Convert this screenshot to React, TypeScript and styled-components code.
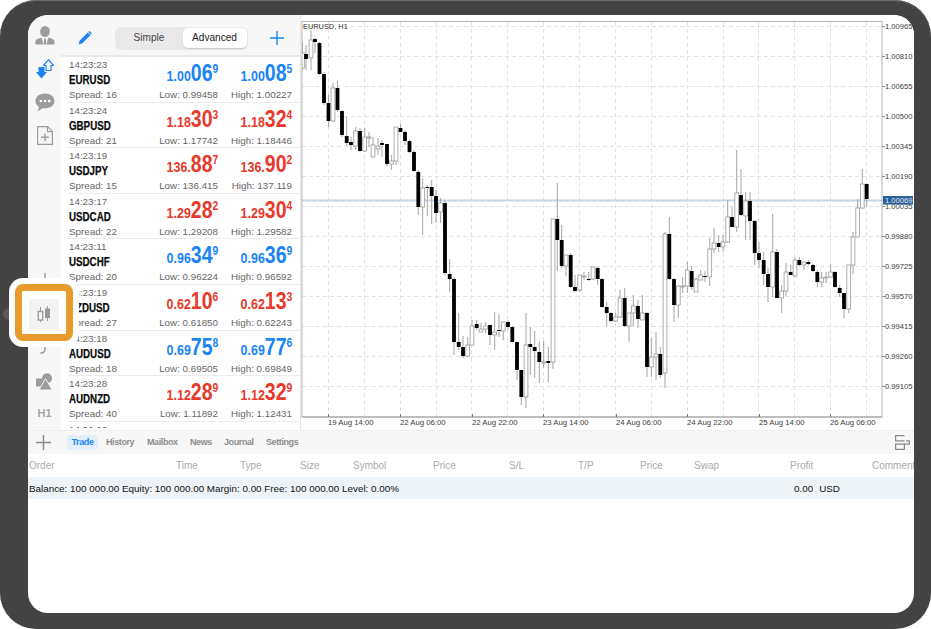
import React from "react";
import styled, { createGlobalStyle } from "styled-components";

const Global = createGlobalStyle`
  html, body { margin: 0; padding: 0; background: #fff; }
  body { font-family: "Liberation Sans", Arial, sans-serif; }
`;

const BLUE = "#1a84f5";
const RED = "#e8392b";

const Frame = styled.div`
  position: relative;
  width: 931px;
  height: 629px;
  box-sizing: border-box;
  padding: 15px 17px 16px 28px;
  background: #434343;
  border-radius: 36px;
  box-shadow: inset 0 1px 0 #6a6a6a;
  overflow: hidden;
`;

const HomeButton = styled.div`
  position: absolute;
  left: 3px;
  top: 308px;
  width: 12px;
  height: 12px;
  border-radius: 50%;
  background: #5a5a5a;
`;

const Screen = styled.div`
  width: 886px;
  height: 598px;
  background: #fff;
  border-radius: 20px;
  overflow: hidden;
  display: flex;
  flex-direction: column;
`;

const Upper = styled.div`
  height: 415px;
  display: flex;
`;

const Rail = styled.nav`
  width: 33px;
  flex: none;
  background: #f7f7f7;
  display: flex;
  flex-direction: column;
  justify-content: space-between;
  align-items: center;
  padding: 11px 0 10px;
  box-sizing: border-box;
`;

const RailGroup = styled.div<{ $gap: number }>`
  display: flex;
  flex-direction: column;
  align-items: center;
  gap: ${(p) => p.$gap}px;
  svg { display: block; }
`;

const H1Label = styled.span`
  font-size: 11px;
  font-weight: 700;
  color: #a8a8a8;
  line-height: 14px;
`;

const Watch = styled.section`
  width: 240px;
  flex: none;
  display: flex;
  flex-direction: column;
  border-right: 1px solid #e6e6e6;
  box-sizing: border-box;
`;

const WatchHead = styled.header`
  height: 42px;
  flex: none;
  box-sizing: border-box;
  background: #f7f7f7;
  border-bottom: 2px solid #e9e9e9;
  display: flex;
  align-items: center;
  padding: 6px 16px 0 17px;
  justify-content: space-between;
`;

const Segment = styled.div`
  width: 133px;
  height: 23px;
  box-sizing: border-box;
  padding: 1px;
  background: #e9e9e9;
  border-radius: 6px;
  display: flex;
`;

const SegmentItem = styled.div<{ $on?: boolean }>`
  flex: ${(p) => (p.$on ? "0 0 64px" : "1")};
  height: 20px;
  border-radius: 5px;
  font-size: 10.1px;
  line-height: 20px;
  text-align: center;
  color: ${(p) => (p.$on ? "#222" : "#444")};
  background: ${(p) => (p.$on ? "#fff" : "transparent")};
  box-shadow: ${(p) => (p.$on ? "0 1px 1px rgba(0,0,0,.12)" : "none")};
`;

const QuoteList = styled.div`
  height: 371px;
  flex: none;
  overflow: hidden;
  background: #fff;
`;

const QuoteRow = styled.div`
  height: 45.6px;
  box-sizing: border-box;
  margin-left: 7px;
  padding: 1px 8px 0 1px;
  border-bottom: 1px solid #ececec;
  display: grid;
  grid-template-columns: 1fr 74px 74px;
`;

const Info = styled.div`
  display: flex;
  flex-direction: column;
`;

const Muted = styled.span`
  font-size: 9.8px;
  line-height: 14px;
  color: #666;
  white-space: nowrap;
`;

const Symbol = styled.span`
  display: block;
  font-size: 12.5px;
  font-weight: 700;
  line-height: 16px;
  color: #0a0a0a;
  -webkit-text-stroke: 0.25px #0a0a0a;
  transform: scaleX(0.78);
  transform-origin: left center;
`;

const QuoteCell = styled.div`
  display: flex;
  flex-direction: column;
  align-items: flex-end;
  justify-content: flex-end;
`;

const Price = styled.div<{ $color: string }>`
  height: 30px;
  line-height: 30px;
  font-weight: 700;
  color: ${(p) => p.$color};
  white-space: nowrap;
  transform: scaleX(0.83);
  transform-origin: right center;
`;

const Prefix = styled.span`
  font-size: 15px;
`;
const Big = styled.span`
  font-size: 23.5px;
`;
const Sup = styled.span`
  font-size: 12.5px;
  line-height: 1;
  vertical-align: 8px;
`;

const ChartPane = styled.div`
  flex: 1;
  min-width: 0;
`;

const ChartSvg = styled.svg`
  display: block;
  width: 613px;
  height: 415px;
  background: #fff;
`;

const Toolbar = styled.div`
  height: 24px;
  flex: none;
  box-sizing: border-box;
  background: #f7f7f7;
  border-top: 1px solid #efefef;
  display: flex;
  align-items: center;
  padding: 0 4px 0 8px;
`;

const Tabs = styled.div`
  display: flex;
  align-items: center;
  margin-left: 16px;
  flex: 1;
`;

const Tab = styled.div<{ $on?: boolean; $w: number }>`
  width: ${(p) => p.$w}px;
  height: 15px;
  line-height: 15px;
  font-size: 9px;
  font-weight: 700;
  letter-spacing: -0.4px;
  text-align: ${(p) => (p.$on ? "center" : "left")};
  color: ${(p) => (p.$on ? BLUE : "#8e8e8e")};
  background: ${(p) => (p.$on ? "#e3effc" : "transparent")};
  border-radius: 3px;
  margin-right: ${(p) => (p.$on ? 8 : 0)}px;
`;

const ColumnRow = styled.div`
  height: 23px;
  flex: none;
  display: flex;
  align-items: center;
  padding-left: 1px;
  white-space: nowrap;
`;

const Column = styled.span<{ $w: number }>`
  flex: 0 0 ${(p) => p.$w}px;
  font-size: 10px;
  color: #ababab;
`;

const BalanceRow = styled.div`
  height: 22px;
  flex: none;
  background: #eef3f8;
  display: flex;
  align-items: center;
  padding-left: 1px;
  font-size: 9.85px;
  color: #111;
  white-space: nowrap;
`;

const BalanceText = styled.span`
  flex: 0 0 765px;
`;

const Currency = styled.span`
  margin-left: 6px;
`;

const Callout = styled.div`
  position: absolute;
  left: 9px;
  top: 278px;
  padding: 6px;
  background: #fff;
  border-radius: 14px;
`;

const CalloutRing = styled.div`
  padding: 8px 7px 5px;
  border: 7px solid #e99a2c;
  border-radius: 8px;
  background: #fff;
`;

const CalloutTile = styled.div`
  width: 30px;
  height: 30px;
  background: #f3f3f3;
  display: flex;
  align-items: center;
  justify-content: center;
`;

type Candle = [number, "b" | "w", number, number, number, number];

// x, body colour, wick top, body top, body bottom, wick bottom
const candles: Candle[] = [
  [302.5, "w", 42, 53, 68, 70], [306, "b", 45, 54, 59, 70], [311, "w", 30, 40, 58, 70], [315, "b", 38, 39, 42, 53],
  [319.5, "b", 42, 43, 74, 75], [324, "b", 72, 74, 103, 105], [328.5, "b", 95, 103, 121, 127], [333, "w", 83, 88, 121, 122],
  [337.5, "b", 81, 88, 110, 112], [342, "b", 110, 111, 135, 137], [346.7, "b", 117, 136, 143, 146], [351, "b", 137, 142, 145, 150],
  [355.7, "w", 127, 131, 146, 150], [360, "b", 128, 131, 151, 152], [364.7, "w", 128, 137, 151, 152], [369, "w", 132, 137, 138, 147],
  [373, "w", 137, 145, 157, 157], [378, "w", 138, 146, 149, 155], [382, "b", 140, 143, 145, 157], [387, "b", 144, 144, 164, 166],
  [391.6, "w", 155, 161, 164, 170], [396, "w", 127, 127, 161, 165], [400.5, "b", 124, 128, 132, 132], [405, "b", 130, 132, 141, 145],
  [409.5, "b", 140, 141, 152, 153], [414, "b", 150, 152, 171, 172], [418.3, "b", 170, 172, 207, 215], [422.7, "w", 178, 188, 207, 235],
  [427.3, "b", 185, 187, 188, 216], [431.7, "b", 180, 187, 196, 224], [436, "b", 190, 196, 213, 223], [440.6, "w", 198, 203, 212, 223],
  [445, "b", 200, 203, 273, 275], [449.7, "b", 259, 274, 279, 292], [454, "b", 277, 279, 342, 355], [458.7, "b", 313, 342, 347, 350],
  [463, "b", 336, 347, 356, 358], [467.7, "w", 337, 345, 356, 357], [472, "w", 320, 326, 345, 345], [476.7, "b", 320, 324, 328, 330],
  [481, "w", 323, 329, 332, 332], [485.7, "w", 322, 326, 329, 333], [490, "b", 325, 325, 335, 345], [494.7, "w", 312, 332, 335, 350],
  [499, "b", 314, 330, 331, 337], [503.3, "w", 322, 322, 331, 340], [508, "b", 320, 322, 327, 330], [512.3, "b", 326, 327, 342, 342],
  [517, "b", 342, 342, 370, 380], [521.3, "b", 370, 370, 397, 405], [526, "w", 313, 345, 397, 408], [530.3, "b", 327, 344, 347, 375],
  [534.7, "b", 331, 347, 351, 378], [539.3, "b", 342, 352, 362, 383], [543.7, "w", 341, 362, 362, 368], [548.3, "b", 347, 361, 363, 382],
  [553, "w", 219, 219, 362, 369], [557.3, "b", 183, 219, 240, 271], [561.7, "b", 225, 240, 266, 268], [566, "w", 255, 255, 266, 276],
  [570.7, "b", 253, 255, 287, 288], [575, "b", 275, 287, 291, 292], [579.7, "w", 275, 275, 290, 292], [584, "w", 272, 276, 276, 280],
  [588.7, "b", 272, 279, 280, 281], [593, "w", 267, 267, 279, 280], [597.7, "b", 267, 268, 279, 285], [602, "b", 278, 279, 307, 308],
  [606.7, "b", 302, 307, 313, 326], [611, "b", 312, 313, 321, 322], [615.7, "w", 313, 317, 321, 322], [620, "w", 290, 298, 317, 318],
  [624.7, "b", 288, 298, 326, 327], [629, "w", 313, 313, 326, 342], [633.3, "w", 295, 306, 313, 326], [638, "b", 300, 306, 319, 328],
  [642.3, "w", 295, 313, 320, 320], [647, "b", 312, 313, 367, 377], [651.3, "w", 338, 357, 367, 377], [656, "w", 332, 354, 357, 380],
  [660.3, "b", 347, 354, 375, 378], [665, "w", 232, 234, 373, 388], [669.3, "b", 217, 234, 279, 280], [674, "b", 278, 279, 305, 322],
  [678.3, "w", 285, 286, 305, 318], [682.7, "w", 277, 286, 286, 293], [687.3, "w", 262, 270, 286, 293], [691.7, "b", 266, 271, 287, 290],
  [696, "w", 278, 279, 292, 292], [700.7, "w", 270, 275, 280, 280], [705, "b", 271, 276, 277, 282], [709.7, "w", 238, 249, 277, 286],
  [714, "w", 228, 243, 249, 253], [718.7, "b", 235, 243, 247, 252], [723, "w", 235, 242, 247, 252], [727.7, "w", 200, 217, 242, 243],
  [732, "b", 207, 217, 227, 228], [736.7, "w", 150, 193, 227, 232], [741, "b", 169, 195, 215, 216], [745.7, "w", 192, 201, 216, 240],
  [750, "b", 192, 201, 221, 240], [754.7, "b", 220, 221, 253, 265], [759, "b", 242, 253, 260, 268], [763.7, "b", 252, 260, 274, 285],
  [768, "b", 268, 274, 287, 302], [772.7, "w", 214, 252, 287, 297], [777, "b", 249, 252, 298, 298], [781.7, "w", 285, 291, 298, 313],
  [786, "w", 263, 272, 291, 296], [790.7, "b", 265, 272, 275, 275], [795, "w", 257, 260, 276, 277], [799.3, "b", 257, 260, 265, 266],
  [804, "w", 262, 262, 265, 270], [808.3, "b", 260, 262, 264, 265], [813, "b", 264, 265, 271, 272], [817.3, "b", 270, 272, 282, 287],
  [821.7, "w", 272, 278, 282, 287], [826, "w", 272, 277, 278, 283], [830.7, "w", 264, 272, 277, 278], [835, "b", 271, 272, 287, 288],
  [839.7, "b", 285, 288, 293, 297], [844, "b", 293, 293, 309, 318], [848.7, "w", 265, 265, 309, 313], [853, "w", 232, 237, 265, 274],
  [857.7, "w", 199, 208, 237, 237], [862.3, "w", 169, 184, 208, 209], [866.7, "b", 183, 184, 199, 206],
];

const priceLabels = ["1.00965", "1.00810", "1.00655", "1.00500", "1.00345", "1.00190", "1.00035", "0.99880", "0.99725", "0.99570", "0.99415", "0.99260", "0.99105"];
const timeLabels: [number, string][] = [
  [328, "19 Aug 14:00"], [400, "22 Aug 06:00"], [472, "22 Aug 22:00"], [543, "23 Aug 14:00"],
  [616, "24 Aug 06:00"], [687, "24 Aug 22:00"], [759, "25 Aug 14:00"], [830, "26 Aug 06:00"],
];
const gridX = Array.from({ length: 16 }, (_, i) => Math.round(328 + i * 35.87) + 0.5);

const PriceChart = () => (
  <ChartSvg viewBox="301 15 613 415">
    <defs>
      <clipPath id="plot">
        <rect x="302" y="22" width="580" height="395" />
      </clipPath>
    </defs>
    {priceLabels.map((_, i) => (
      <line key={i} x1="302" x2="882" y1={26.5 + i * 30} y2={26.5 + i * 30} stroke="#e2e2e2" strokeDasharray="4 3" />
    ))}
    {gridX.map((x) => (
      <line key={x} x1={x} x2={x} y1="22" y2="417" stroke="#e2e2e2" strokeDasharray="4 3" />
    ))}
    <rect x="302" y="199.5" width="580" height="2" fill="#c3d5e8" />
    <g clipPath="url(#plot)">
      {candles.map(([x, kind, hi, top, bottom, lo]) => (
        <g key={x}>
          <line x1={x} x2={x} y1={hi} y2={lo} stroke="#a4a4a4" />
          <rect
            x={x - 1.9}
            y={top}
            width="3.8"
            height={Math.max(bottom - top, 1)}
            fill={kind === "b" ? "#000" : "#fff"}
            stroke={kind === "b" ? "none" : "#a4a4a4"}
            strokeWidth="0.9"
          />
        </g>
      ))}
    </g>
    <rect x="302" y="21.5" width="580" height="395.5" fill="none" stroke="#b4b4b4" />
    <line x1="302" x2="882" y1="417" y2="417" stroke="#b4b4b4" strokeWidth="1.5" />
    <text x="303" y="29" fontSize="7.4" fill="#333" fontFamily="Liberation Sans">EURUSD, H1</text>
    {priceLabels.map((label, i) => (
      <g key={label}>
        <line x1="882" x2="885" y1={26.5 + i * 30} y2={26.5 + i * 30} stroke="#8a8a8a" />
        <text x="885" y={29.3 + i * 30} fontSize="7.6" fill="#3c3c3c" fontFamily="Liberation Sans">{label}</text>
      </g>
    ))}
    <rect x="883" y="196" width="30" height="8.5" fill="#2f5f9b" />
    <text x="885" y="203" fontSize="7.6" fill="#dfe8f3" fontFamily="Liberation Sans">1.00069</text>
    {timeLabels.map(([x, label]) => (
      <g key={label}>
        <line x1={x + 0.5} x2={x + 0.5} y1="414" y2="417" stroke="#777" />
        <text x={x} y="425" fontSize="7.75" fill="#3c3c3c" fontFamily="Liberation Sans">{label}</text>
      </g>
    ))}
  </ChartSvg>
);

const PersonIcon = () => (
  <svg width="20" height="19" viewBox="0 0 20 19" fill="#9c9c9c">
    <ellipse cx="10" cy="5.5" rx="4.8" ry="5.5" />
    <path d="M0.5 18.5v-3c0-2.2 3-3.2 6.2-3.8L8.5 18.5zM19.5 18.5v-3c0-2.2-3-3.2-6.2-3.8l-1.8 6.8z" />
    <path d="M9.2 12.5h1.6l.6 6h-2.8z" />
  </svg>
);

const TransferIcon = () => (
  <svg width="18" height="20" viewBox="0 0 18 20">
    <path d="M12.5.7 17.5 6.500H15V11.500H10V6.500H7.500z" fill="#fff" stroke={BLUE} strokeWidth="1.2" strokeLinejoin="round" />
    <path d="M2.500 8h6v5H11L5.500 19.500 0 13h2.500z" fill={BLUE} />
  </svg>
);

const ChatIcon = () => (
  <svg width="20" height="19" viewBox="0 0 20 19">
    <path d="M10 .5c5.2 0 9.5 3 9.5 7.4s-4.3 7.4-9.5 7.4c-.9 0-1.800-.1-2.600-.3-1.300 1.500-3.200 2.800-5.200 3.200 1-1.200 1.600-2.600 1.700-4.300C1.700 12.400.5 10.300.5 7.900.5 3.500 4.800.5 10 .5z" fill="#9c9c9c" />
    <circle cx="5.800" cy="8" r="1.300" fill="#fff" />
    <circle cx="10" cy="8" r="1.300" fill="#fff" />
    <circle cx="14.200" cy="8" r="1.300" fill="#fff" />
  </svg>
);

const NewDocIcon = () => (
  <svg width="16" height="19" viewBox="0 0 16 19" fill="none" stroke="#9c9c9c" strokeWidth="1.2">
    <path d="M.6.600h10l4.800 4.800v13H.6z" />
    <path d="M10.500.600v5h5" />
    <path d="M8 7.500v7.500M4.200 11.200h7.600" strokeWidth="1.4" />
  </svg>
);

const LineToolIcon = () => (
  <svg width="18" height="18" viewBox="0 0 18 18" fill="none" stroke="#9c9c9c" strokeWidth="1.5">
    <path d="M9 2v16M1 10h16" />
  </svg>
);

const CurveIcon = () => (
  <svg width="14" height="19" viewBox="0 0 14 19" fill="none" stroke="#9c9c9c" strokeWidth="1.5">
    <path d="M7 0v11c0 2.500-1.500 4-4 4" strokeLinecap="round" />
  </svg>
);

const ShapesIcon = () => (
  <svg width="17" height="17" viewBox="0 0 17 17" fill="#9c9c9c">
    <rect x="0" y="5.500" width="8" height="8" />
    <circle cx="11" cy="5.200" r="5" />
    <path d="M9.500 5.500l6.800 11.500H3z" stroke="#f7f7f7" strokeWidth="1" />
  </svg>
);

const PencilIcon = () => (
  <svg width="14" height="14" viewBox="0 0 14 14" fill={BLUE}>
    <path d="M9.800 1.600 12.400 4.200 4.400 12.200.6 13.400 1.800 9.600z" />
    <path d="M10.700.700c.5-.5 1.100-.5 1.600 0l1 1c.5.5.5 1.100 0 1.600l-.4.400-2.600-2.600z" />
  </svg>
);

const BluePlus = () => (
  <svg width="14" height="14" viewBox="0 0 14 14" stroke={BLUE} strokeWidth="1.400">
    <path d="M7 0v14M0 7h14" />
  </svg>
);

const GreyPlus = () => (
  <svg width="15" height="15" viewBox="0 0 15 15" stroke="#8a8a8a" strokeWidth="1.500">
    <path d="M7.500 0v15M0 7.500h15" />
  </svg>
);

const LayoutIcon = () => (
  <svg width="15" height="15" viewBox="0 0 15 15" fill="none" stroke="#8a8a8a" strokeWidth="1.200">
    <path d="M9.500.600H.6v5.300h8.900" />
    <path d="M.6 9.100h8.800v5.300H.6z" />
    <path d="M11 5.900h3.400v3.200h-5" />
  </svg>
);

const CandlesIcon = () => (
  <svg width="14" height="17" viewBox="0 0 14 17" fill="none" stroke="#999">
    <path d="M3.500 1v15M10.500 0v15" strokeWidth="1" />
    <rect x="1.300" y="5.500" width="4.400" height="8.500" fill="#f3f3f3" strokeWidth="1.300" />
    <rect x="8" y="2.500" width="5" height="9.500" fill="#999" stroke="none" />
  </svg>
);

type Side = [string, string, string, string];
type Quote = { time: string; sym: string; spread: number; color: string; bid: Side; ask: Side };

const quotes: Quote[] = [
  { time: "14:23:23", sym: "EURUSD", spread: 16, color: BLUE, bid: ["1.00", "06", "9", "Low: 0.99458"], ask: ["1.00", "08", "5", "High: 1.00227"] },
  { time: "14:23:24", sym: "GBPUSD", spread: 21, color: RED, bid: ["1.18", "30", "3", "Low: 1.17742"], ask: ["1.18", "32", "4", "High: 1.18446"] },
  { time: "14:23:19", sym: "USDJPY", spread: 15, color: RED, bid: ["136.", "88", "7", "Low: 136.415"], ask: ["136.", "90", "2", "High: 137.119"] },
  { time: "14:23:17", sym: "USDCAD", spread: 22, color: RED, bid: ["1.29", "28", "2", "Low: 1.29208"], ask: ["1.29", "30", "4", "High: 1.29582"] },
  { time: "14:23:11", sym: "USDCHF", spread: 20, color: BLUE, bid: ["0.96", "34", "9", "Low: 0.96224"], ask: ["0.96", "36", "9", "High: 0.96592"] },
  { time: "14:23:19", sym: "NZDUSD", spread: 27, color: RED, bid: ["0.62", "10", "6", "Low: 0.61850"], ask: ["0.62", "13", "3", "High: 0.62243"] },
  { time: "14:23:18", sym: "AUDUSD", spread: 18, color: BLUE, bid: ["0.69", "75", "8", "Low: 0.69505"], ask: ["0.69", "77", "6", "High: 0.69849"] },
  { time: "14:23:28", sym: "AUDNZD", spread: 40, color: RED, bid: ["1.12", "28", "9", "Low: 1.11892"], ask: ["1.12", "32", "9", "High: 1.12431"] },
  { time: "14:02:00", sym: "NZDCAD", spread: 30, color: RED, bid: ["0.80", "15", "2", "Low: 0.80011"], ask: ["0.80", "18", "2", "High: 0.80542"] },
];

const QuoteSide = ({ side, color }: { side: Side; color: string }) => (
  <QuoteCell>
    <Price $color={color}>
      <Prefix>{side[0]}</Prefix>
      <Big>{side[1]}</Big>
      <Sup>{side[2]}</Sup>
    </Price>
    <Muted>{side[3]}</Muted>
  </QuoteCell>
);

const tabs: [string, number][] = [["History", 41], ["Mailbox", 43], ["News", 34], ["Journal", 42], ["Settings", 40]];
const columns: [string, number][] = [
  ["Order", 147], ["Time", 64], ["Type", 60], ["Size", 53], ["Symbol", 80], ["Price", 76],
  ["S/L", 69], ["T/P", 62], ["Price", 54], ["Swap", 96], ["Profit", 82], ["Comment", 60],
];

export default function App() {
  return (
    <>
      <Global />
      <Frame>
        <HomeButton />
        <Screen>
          <Upper>
            <Rail>
              <RailGroup $gap={14}>
                <PersonIcon />
                <TransferIcon />
                <ChatIcon />
                <NewDocIcon />
              </RailGroup>
              <RailGroup $gap={16}>
                <LineToolIcon />
                <CandlesIcon />
                <CurveIcon />
                <ShapesIcon />
                <H1Label>H1</H1Label>
              </RailGroup>
            </Rail>
            <Watch>
              <WatchHead>
                <PencilIcon />
                <Segment>
                  <SegmentItem>Simple</SegmentItem>
                  <SegmentItem $on>Advanced</SegmentItem>
                </Segment>
                <BluePlus />
              </WatchHead>
              <QuoteList>
                {quotes.map((q) => (
                  <QuoteRow key={q.sym}>
                    <Info>
                      <Muted>{q.time}</Muted>
                      <Symbol>{q.sym}</Symbol>
                      <Muted>Spread: {q.spread}</Muted>
                    </Info>
                    <QuoteSide side={q.bid} color={q.color} />
                    <QuoteSide side={q.ask} color={q.color} />
                  </QuoteRow>
                ))}
              </QuoteList>
            </Watch>
            <ChartPane>
              <PriceChart />
            </ChartPane>
          </Upper>
          <Toolbar>
            <GreyPlus />
            <Tabs>
              <Tab $on $w={31}>Trade</Tab>
              {tabs.map(([label, w]) => (
                <Tab key={label} $w={w}>{label}</Tab>
              ))}
            </Tabs>
            <LayoutIcon />
          </Toolbar>
          <ColumnRow>
            {columns.map(([label, w], i) => (
              <Column key={i} $w={w}>{label}</Column>
            ))}
          </ColumnRow>
          <BalanceRow>
            <BalanceText>Balance: 100 000.00 Equity: 100 000.00 Margin: 0.00 Free: 100 000.00 Level: 0.00%</BalanceText>
            <span>0.00</span>
            <Currency>USD</Currency>
          </BalanceRow>
        </Screen>
        <Callout>
          <CalloutRing>
            <CalloutTile>
              <CandlesIcon />
            </CalloutTile>
          </CalloutRing>
        </Callout>
      </Frame>
    </>
  );
}
